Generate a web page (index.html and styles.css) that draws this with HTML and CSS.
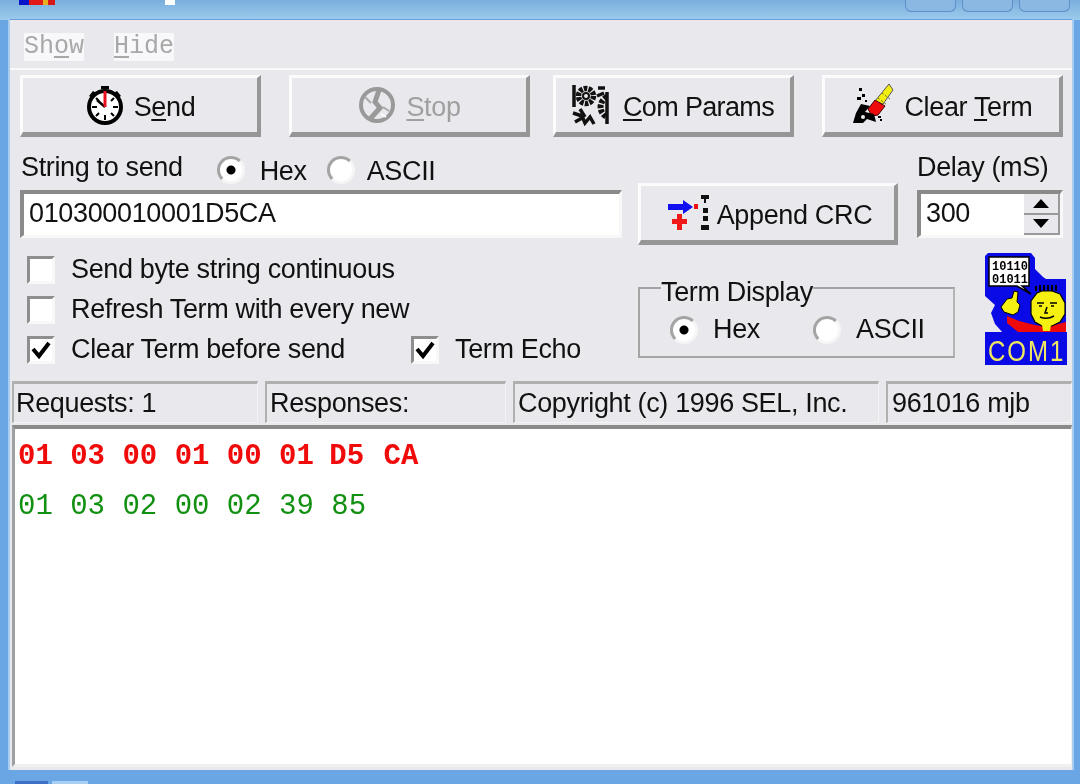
FILE: index.html
```html
<!DOCTYPE html>
<html lang="en">
<head>
<meta charset="utf-8">
<title>Modbus Term</title>
<link rel="stylesheet" href="styles.css">
</head>
<body>
<div class="window">
  <header class="titlebar">
    <svg class="app-icon" width="36" height="5" viewBox="0 0 36 5"><rect width="10" height="5" fill="#0a14c8"/><rect x="10" width="14" height="5" fill="#e01818"/><rect x="24" width="5" height="5" fill="#e8b020"/><rect x="29" width="7" height="5" fill="#d81818"/></svg>
    <span class="title-mark"></span>
    <div class="win-buttons"><span class="win-btn"></span><span class="win-btn"></span><span class="win-btn"></span></div>
  </header>
  <main class="client">
    <nav class="menu"><span class="menu-item">Sh<u>o</u>w</span><span class="menu-item"><u>H</u>ide</span></nav>

    <section class="toolbar">
      <button class="btn btn-send">
        <svg width="40" height="40" viewBox="0 0 40 40"><rect x="16" y="1" width="8" height="3" fill="#000"/><rect x="18.5" y="3" width="3" height="5" fill="#000"/><path d="M4 11l4-5 5 3-4 5zM36 11l-4-5-5 3 4 5z" fill="#000"/><circle cx="20" cy="22" r="16" fill="#fff" stroke="#000" stroke-width="4"/><path d="M20 9v5M20 30v5M7 22h5M28 22h5M11 13l3 3M29 13l-3 3M11 31l3-3M29 31l-3-3" stroke="#000" stroke-width="2"/><path d="M12 15l8 7" stroke="#000" stroke-width="2.5"/><path d="M20 6v16" stroke="#e8101c" stroke-width="3"/></svg>
        <span>S<u>e</u>nd</span>
      </button>
      <button class="btn btn-stop" disabled>
        <svg width="40" height="40" viewBox="0 0 40 40"><circle cx="20" cy="20" r="16" fill="#e9e8ec" stroke="#999" stroke-width="4"/><path d="M22 5l-4 12 5 6-10 11" fill="none" stroke="#999" stroke-width="5"/><path d="M8 12l6 6M32 26l-6-4" stroke="#aaa" stroke-width="2"/><path d="M24 29l5 3" stroke="#fff" stroke-width="2"/></svg>
        <span><u>S</u>top</span>
      </button>
      <button class="btn btn-com">
        <svg width="42" height="42" viewBox="0 0 42 42"><g fill="none" stroke="#111"><circle cx="14" cy="12" r="7.5" stroke-width="5.5" stroke-dasharray="3.5 1.2"/><circle cx="14" cy="12" r="3" stroke-width="2"/><path d="M35 13a11 11 0 0 0 0 20" stroke-width="6" stroke-dasharray="3.5 1.5"/><path d="M35 8v32M2 1v22M26 4h7M25 12l7-3M1 29l9 3 3 7 5-6 4 7M3 38l7-4M8 25l5 8" stroke-width="3.5"/></g></svg>
        <span class="com-label"><u>C</u>om Params</span>
      </button>
      <button class="btn btn-clear">
        <svg width="44" height="42" viewBox="0 0 44 42"><path d="M24 17L38 0l4 6-10 14z" fill="#f2ee10" stroke="#555" stroke-width="1"/><path d="M27 14l9 7M31 9l8 6M24 17l9 7" stroke="#6a6a10" stroke-width="1" stroke-dasharray="2 2"/><path d="M17 25l7-9 10 6-7 9-6 1z" fill="#ee0a0a" stroke="#400" stroke-width="1"/><path d="M2 39l3-10 5-9 9 2-5 6 9 2 2 8-9-3-4 4zM8 4h3v3H8zM11 10h3v3h-3zM6 13h4v3H6zM14 16h2v2h-2zM27 32h3v2h-3zM29 35h2v2h-2z" fill="#000"/><circle cx="12" cy="33" r="2" fill="#e9e8ec"/></svg>
        <span>Clear <u>T</u>erm</span>
      </button>
    </section>

    <section class="send-row">
      <div class="send-col">
        <div class="send-head">
          <span class="label">String to send</span>
          <span class="radio-group">
            <span class="option"><i class="radio on"></i><span>Hex</span></span>
            <span class="option option-tight"><i class="radio"></i><span>ASCII</span></span>
          </span>
        </div>
        <input class="field" value="010300010001D5CA" readonly>
      </div>
      <button class="btn btn-crc">
        <svg width="42" height="36" viewBox="0 0 42 36"><path d="M1 9h15V5l10 7-10 7v-4H1z" fill="#1010f0"/><path d="M5 24h5v-5h5v5h5v5h-5v6h-5v-6H5z" fill="#f01818"/><rect x="27" y="9" width="4" height="5" fill="#f01010"/><path d="M34 0h8v4h-3v4h-2V4h-3zM36 13h5v5h-5zM36 21h5v5h-5zM34 30h8v5h-8z" fill="#111"/></svg>
        <span>Append CRC</span>
      </button>
      <div class="delay-col">
        <span class="label">Delay (mS)</span>
        <div class="spin">
          <span class="spin-val">300</span>
          <span class="spin-btns">
            <span class="spin-btn"><svg width="16" height="9" viewBox="0 0 18 10"><path d="M9 0l9 10H0z"/></svg></span>
            <span class="spin-btn"><svg width="16" height="9" viewBox="0 0 18 10"><path d="M0 0h18L9 10z"/></svg></span>
          </span>
        </div>
      </div>
    </section>

    <section class="options">
      <div class="checks">
        <div class="check-row"><i class="box"></i><span>Send byte string continuous</span></div>
        <div class="check-row"><i class="box"></i><span>Refresh Term with every new</span></div>
        <div class="check-row">
          <i class="box"><svg width="22" height="20" viewBox="0 0 22 20"><path d="M3 9l6 7L19 3" fill="none" stroke="#000" stroke-width="4"/></svg></i><span class="clear-label">Clear Term before send</span>
          <i class="box"><svg width="22" height="20" viewBox="0 0 22 20"><path d="M3 9l6 7L19 3" fill="none" stroke="#000" stroke-width="4"/></svg></i><span>Term Echo</span>
        </div>
      </div>
      <fieldset class="group">
        <legend>Term Display</legend>
        <span class="option group-hex"><i class="radio on"></i><span>Hex</span></span>
        <span class="option group-ascii"><i class="radio"></i><span>ASCII</span></span>
      </fieldset>
      <svg class="logo" width="82" height="112" viewBox="0 0 82 112">
        <path d="M0 3l3-3h43l4 5v11l8 8 3 2h20v60H0V80h18l-8-9-4-11 4-8-10-9z" fill="#0a0ae6"/>
        <rect x="0" y="79" width="82" height="33" fill="#0a0ae6"/>
        <path d="M4 4h40v29H37l9 8-14-8H4z" fill="#fff" stroke="#000" stroke-width="1.5"/>
        <text class="bits" x="7" y="17">10110</text>
        <text class="bits" x="7" y="30">01011</text>
        <path d="M22 63l12 5 16 4 12 2 19-5v10H33L22 70z" fill="#ee0a0a"/>
        <path d="M51 38v-5M55 38v-6M59 38v-6M63 38v-6M67 38v-6M71 38v-6" stroke="#000" stroke-width="2"/>
        <path d="M46 48l6-8 5-2h10l8 3 5 9v11l-5 8-8 4H57l-7-4-4-8z" fill="#f6f010" stroke="#000" stroke-width="1.2"/>
        <path d="M52 50h7M65 50h7M54 53h3M66 53h3M62 54l-2 6h3M55 64q7 3 14-1" fill="none" stroke="#000" stroke-width="1.5"/>
        <path d="M57 72h9l-1 6h-7z" fill="#f6f010"/>
        <path d="M29 38l4 1-1 10 3 3-2 7-5 3-9-3-3-5 6-8 5-1z" fill="#f6f010" stroke="#000" stroke-width="1"/>
        <text class="com-text" transform="translate(3 108) scale(1 1.25)">COM1</text>
      </svg>
    </section>

    <footer class="status">
      <span class="panel p1">Requests: 1</span>
      <span class="panel p2">Responses:</span>
      <span class="panel p3">Copyright (c) 1996 SEL, Inc.</span>
      <span class="panel p4">961016 mjb</span>
    </footer>

    <section class="term">
      <div class="tx">01 03 00 01 00 01 <span class="d5">D5</span> <span class="ca">CA</span></div>
      <div class="rx">01 03 02 00 02 39 85</div>
    </section>
  </main>
  <div class="taskbar"><span class="task t1"></span><span class="task t2"></span></div>
</div>
</body>
</html>
```
FILE: styles.css
```css
* { box-sizing: border-box; }
html, body { margin: 0; padding: 0; }
body {
  width: 1080px; height: 784px; overflow: hidden;
  font-family: "Liberation Sans", Arial, sans-serif;
  font-size: 27px; letter-spacing: -0.35px; color: #111;
}
.window {
  height: 784px; display: flex; flex-direction: column;
  background: #6aa6e4;
}
.titlebar {
  height: 20px; flex: none; display: flex; align-items: flex-start;
  padding-left: 19px; padding-right: 10px;
  background: linear-gradient(#7aaedd, #9ccbec);
}
.app-icon { display: block; }
.title-mark { width: 10px; height: 5px; background: #fff; margin-left: 110px; }
.win-buttons { margin-left: auto; display: flex; gap: 6px; }
.win-btn {
  width: 51px; height: 12px; background: #8ab8e2;
  border: 1px solid #5f8fca; border-top: 0; border-radius: 0 0 6px 6px;
}
.client {
  margin: 0 8px 0 10px; height: 750px; flex: none;
  background: #e9e8ec; display: flex; flex-direction: column;
  box-shadow: -2px 0 0 #a9cdf0, 2px 0 0 #a9cdf0, 0 -1px 0 #6a9edb;
  filter: blur(0.5px);
}
.menu {
  height: 50px; flex: none; display: flex; align-items: center; gap: 30px;
  padding: 5px 0 0 14px; border-bottom: 2px solid #fafafa;
}
.menu-item {
  width: 60px; height: 28px; line-height: 28px; background: #f8f8fa; letter-spacing: 0;
  font-family: "Liberation Mono", monospace; font-size: 25px; color: #a8a8a8;
}
.menu-item u { text-underline-offset: 3px; }

.toolbar { display: flex; padding: 5px 0 0 10px; flex: none; }
.btn {
  font: inherit; letter-spacing: inherit; color: #111; background: #e9e8ec; padding: 0;
  display: flex; align-items: center; justify-content: center; gap: 9px;
  border-style: solid; border-width: 3px 4px 5px 3px;
  border-color: #fbfbfb #969696 #969696 #fbfbfb;
  width: 241px; height: 62px; flex: none;
}
.btn svg { flex: none; }
.btn span { position: relative; top: 2px; }
.btn u { text-underline-offset: 3px; }
.btn-stop { margin-left: 28px; color: #a0a0a0; }
.btn-com { margin-left: 23px; }
.com-label { letter-spacing: -0.65px; }
.btn-clear { margin-left: 28px; }

.send-row { display: flex; padding: 15px 0 0 10px; flex: none; }
.send-col { width: 602px; flex: none; }
.send-head { display: flex; height: 38px; align-items: flex-start; padding-left: 1px; }
.label { display: block; line-height: 30px; }
.radio-group { display: flex; margin-left: 34px; position: relative; top: 2px; gap: 20px; }
.option { display: inline-flex; align-items: center; gap: 15px; }
.radio-group .option span { position: relative; top: 2px; }
.option-tight { gap: 12px; }
.radio {
  display: block; width: 28px; height: 28px; border-radius: 50%; flex: none;
  border: 3px solid; border-color: #a4a4a4 #f6f6f6 #f6f6f6 #a4a4a4; background: #fff;
}
.radio.on { background: radial-gradient(circle, #000 0 4px, #fff 5px); }
.field {
  display: block; width: 100%; height: 48px; margin: 0; padding: 0 0 2px 5px;
  font: inherit; letter-spacing: inherit; color: #111; background: #fff; outline: 0;
  border-style: solid; border-width: 4px 3px 3px 4px;
  border-color: #8a8a8a #f8f8f8 #f8f8f8 #8a8a8a;
}
.btn-crc { width: 260px; margin: 31px 0 0 16px; gap: 8px; padding-left: 4px; }
.delay-col { margin-left: 19px; width: 146px; }
.delay-col .label { height: 38px; }
.spin {
  height: 48px; display: flex; justify-content: space-between;
  background: #fff; padding-left: 5px; line-height: 38px;
  border-style: solid; border-width: 4px 3px 3px 4px;
  border-color: #8a8a8a #f8f8f8 #f8f8f8 #8a8a8a;
}
.spin-btns { display: flex; flex-direction: column; width: 36px; }
.spin-btn {
  flex: 1; display: flex; align-items: center; justify-content: center;
  background: #e9e8ec; border-bottom: 2px solid #999; border-right: 2px solid #999;
}

.options { display: flex; padding: 8px 0 0 17px; height: 136px; flex: none; }
.checks { width: 611px; flex: none; display: flex; flex-direction: column; gap: 11px; margin-top: 2px; }
.check-row { display: flex; align-items: center; height: 29px; gap: 16px; }
.box {
  display: flex; align-items: center; justify-content: center;
  width: 28px; height: 28px; flex: none; background: #fff;
  border: 3px solid; border-color: #8e8e8e #f8f8f8 #f8f8f8 #8e8e8e;
}
.clear-label { width: 324px; flex: none; }
.group {
  margin: 20px 0 0 0; padding: 0 0 0 30px; width: 317px; height: 85px; flex: none;
  border: 2px solid #a4a4a4; border-right-color: #b4b4b4; display: flex; gap: 53px; align-items: center;
}
.group legend { padding: 8px 0 0; margin-left: -9px; line-height: 22px; }
.logo { margin: 0 0 0 30px; flex: none; align-self: flex-start; overflow: visible; }
.bits { font: bold 12px "Liberation Mono", monospace; fill: #000; letter-spacing: 0; }
.com-text { font: 24px "Liberation Sans", sans-serif; fill: #f0e860; letter-spacing: 2px; }

.status { display: flex; height: 44px; padding-left: 2px; flex: none; gap: 7px; }
.panel {
  height: 42px; line-height: 38px; padding-left: 2px; white-space: nowrap;
  border-top: 3px solid #b0b0b0; border-left: 2px solid #b0b0b0;
  border-right: 1px solid #f4f4f4; border-bottom: 1px solid #f4f4f4;
}
.p1 { width: 246px; }
.p2 { width: 241px; padding-left: 3px; }
.p3 { width: 366px; padding-left: 3px; }
.p4 { width: 186px; padding-left: 4px; }
.term {
  flex: 1; margin: 0 0 3px 2px; background: #fff; padding: 11px 0 0 3px;
  border-style: solid; border-width: 4px 1px 3px 3px;
  border-color: #8a8a8a #f0f0f0 #f0f0f0 #a0a0a0;
  font-family: "Liberation Mono", monospace; font-size: 29px; letter-spacing: 0;
}
.tx { color: #f00a0a; font-weight: 700; line-height: 34px; }
.d5 { margin-left: -2px; }
.ca { margin-left: 2px; }
.rx { color: #129012; line-height: 34px; margin-top: 16px; }

.taskbar { flex: 1; display: flex; align-items: flex-end; padding-left: 15px; gap: 4px; }
.task { height: 3px; }
.t1 { width: 33px; background: #3e6fc8; }
.t2 { width: 36px; background: #a8cff2; }
```
